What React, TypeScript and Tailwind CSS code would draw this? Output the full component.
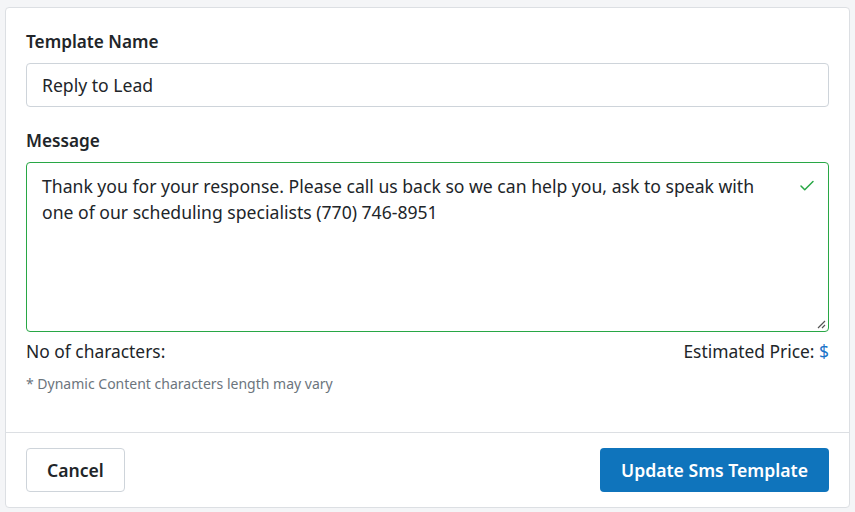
import { Check } from 'lucide-react';

export default function App() {
  const message =
    'Thank you for your response. Please call us back so we can help you, ask to speak with one of our scheduling specialists (770) 746-8951';

  return (
    <div
      className="w-[855px] h-[512px] bg-[#f4f5f7] pt-[7px] pl-[5px]"
      style={{ fontFamily: '"Noto Sans", "Open Sans", sans-serif' }}
    >
      <div className="w-[845px] h-[501px] bg-white border border-[#dcdfe3] rounded flex flex-col">
        {/* Body */}
        <div className="px-5 pt-[21px] flex-1">
          <label className="block text-[17.2px] font-semibold text-[#212529] leading-[26px]">
            Template Name
          </label>
          <div className="mt-[8px] h-[44px] border border-[#ced4da] rounded flex items-center px-[15px] text-[17.6px] text-[#212529]">
            Reply to Lead
          </div>

          <label className="block mt-[21px] text-[17.2px] font-semibold text-[#212529] leading-[26px]">
            Message
          </label>
          <div className="relative mt-[8px] h-[170px] border border-[#28a745] rounded">
            <p className="pl-[15px] pr-[56px] pt-[10px] text-[17.6px] leading-[26px] text-[#212529]">
              {message}
            </p>
            <Check className="absolute right-[12px] top-[14px] text-[#28a745]" size={18} strokeWidth={2} />
            <svg
              className="absolute right-[2px] bottom-[2px]"
              width="9"
              height="9"
              viewBox="0 0 9 9"
            >
              <path d="M8 1 L1 8 M8 5 L5 8" stroke="#555" strokeWidth="1.2" />
            </svg>
          </div>

          <div className="mt-[6px] flex justify-between text-[17.4px] leading-[26px] text-[#212529]">
            <span>No of characters:</span>
            <span>
              Estimated Price: <span className="text-[#1a73c8]">$</span>
            </span>
          </div>
          <p className="mt-[10px] text-[14px] text-[#6c757d] leading-[20px]">
            * Dynamic Content characters length may vary
          </p>
        </div>

        {/* Footer */}
        <div className="h-[75px] border-t border-[#dcdfe3] px-5 flex items-center justify-between">
          <button className="h-[44px] px-[20px] border border-[#ced4da] rounded text-[17.6px] font-semibold text-[#212529] bg-white">
            Cancel
          </button>
          <button className="h-[44px] px-[21px] rounded text-[17.6px] font-semibold text-white bg-[#0f74bc]">
            Update Sms Template
          </button>
        </div>
      </div>
    </div>
  );
}
